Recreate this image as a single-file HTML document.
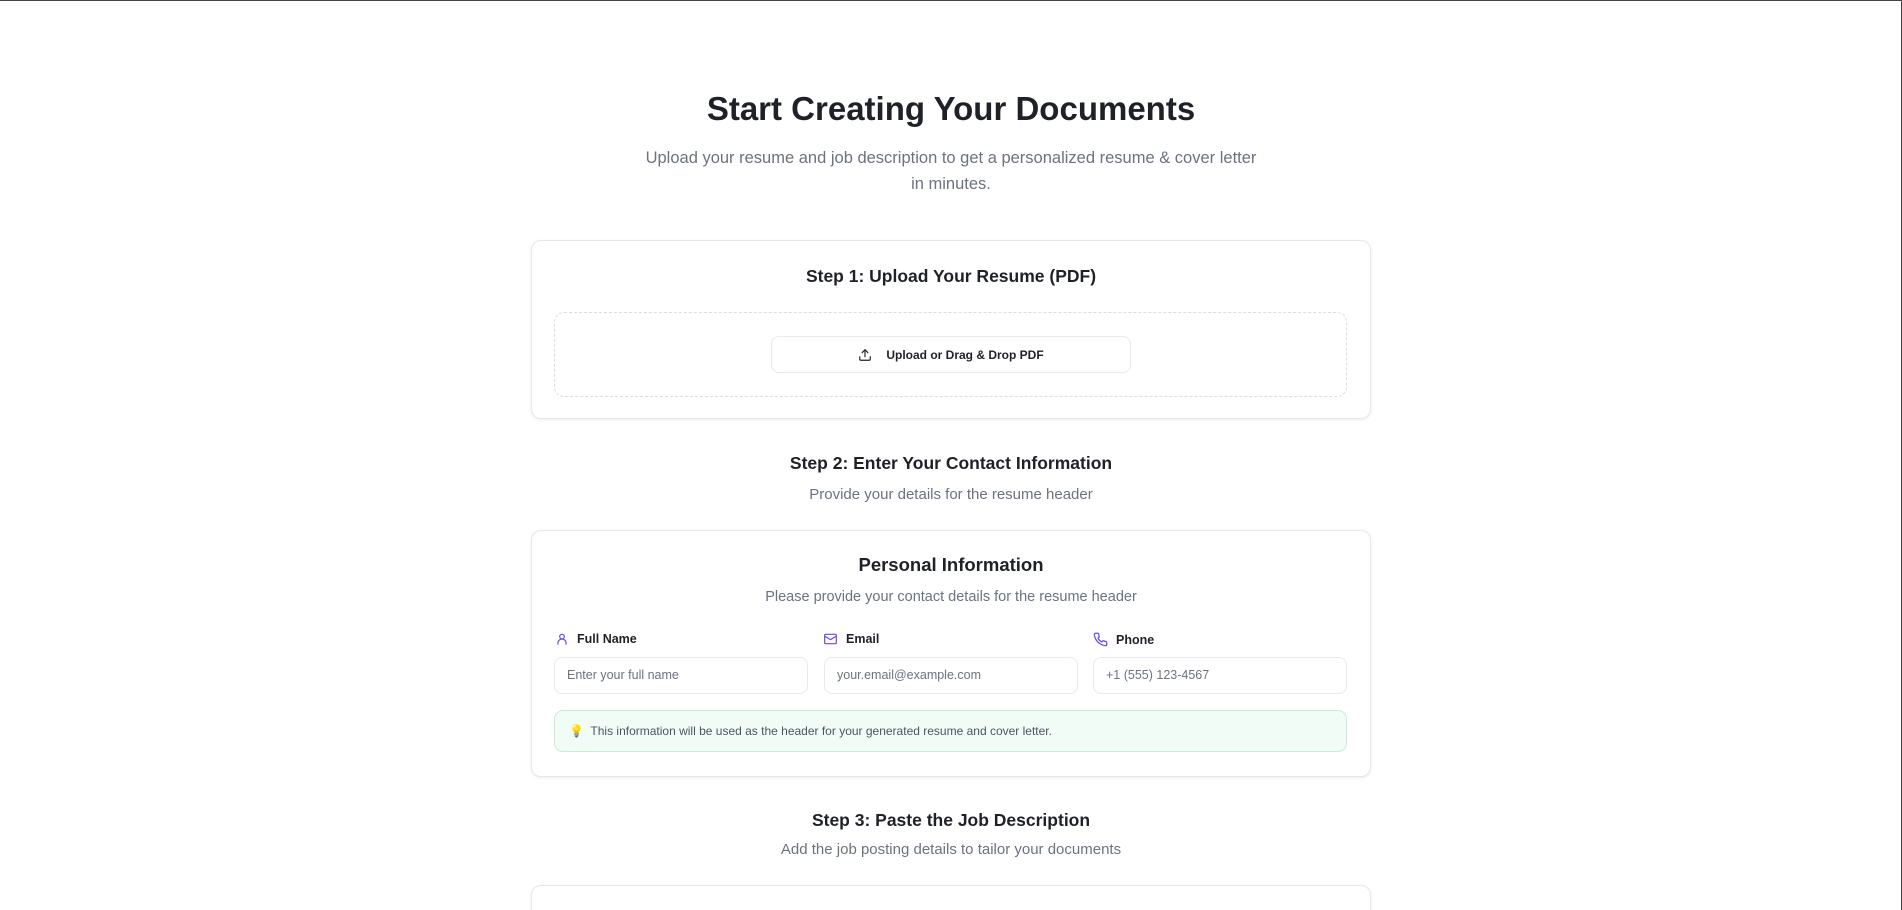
<!DOCTYPE html>
<html><head><meta charset="utf-8"><style>
*{box-sizing:border-box;margin:0;padding:0}
html,body{width:1902px;height:910px;overflow:hidden;background:#fff;font-family:"Liberation Sans","DejaVu Sans",sans-serif;color:#111827}
body{border-top:1px solid #444;border-right:1px solid #444;position:relative}
.abs{position:absolute}
.c{left:0;width:1902px;text-align:center}
h1{font-size:33px;font-weight:700;color:#1f2128}
.sub{color:#6b7280;font-size:16.5px}
.card{position:absolute;left:531px;width:840px;border:1px solid #e6e7ea;border-radius:10px;box-shadow:0 1px 3px rgba(0,0,0,.07);background:#fff}
.h2{font-size:17.5px;font-weight:600;color:#1f2128}
.lbl{position:absolute;font-size:12.5px;font-weight:700;display:flex;align-items:center;gap:8px;color:#1f2128}
.inp{position:absolute;top:656px;height:37px;width:254px;border:1px solid #e8e9ec;border-radius:8px;font-size:12.5px;color:#6b7280;padding:0 12px;line-height:35px}
</style></head><body>
<div class="abs c" style="top:89px"><h1>Start Creating Your Documents</h1></div>
<div class="abs sub" style="left:636px;width:630px;top:144px;text-align:center;line-height:26px">Upload your resume and job description to get a personalized resume &amp; cover letter<br>in minutes.</div>

<div class="card" style="top:239px;height:179px"></div>
<div class="abs c h2" style="top:265px">Step 1: Upload Your Resume (PDF)</div>
<div class="abs" style="left:554px;top:311px;width:793px;height:85px;border:1px dashed #dcdde2;border-radius:10px"></div>
<div class="abs" style="left:771px;top:335px;width:360px;height:37px;border:1px solid #e8e9ec;border-radius:8px;display:flex;align-items:center;justify-content:center;gap:14px;font-size:12px;font-weight:700;color:#1f2128">
<svg width="14" height="14" viewBox="0 0 24 24" fill="none" stroke="#222" stroke-width="2" stroke-linecap="round" stroke-linejoin="round"><path d="M21 15v4a2 2 0 0 1-2 2H5a2 2 0 0 1-2-2v-4"/><path d="M17 8l-5-5-5 5"/><path d="M12 3v12"/></svg>
<span>Upload or Drag &amp; Drop PDF</span></div>

<div class="abs c h2" style="top:452px">Step 2: Enter Your Contact Information</div>
<div class="abs c sub" style="top:485px;font-size:15px">Provide your details for the resume header</div>

<div class="card" style="top:529px;height:247px"></div>
<div class="abs c" style="top:553px;font-size:18.5px;font-weight:600;color:#1f2128">Personal Information</div>
<div class="abs c sub" style="top:588px;font-size:14.5px">Please provide your contact details for the resume header</div>

<div class="lbl" style="left:555px;top:631px"><svg width="14" height="14" viewBox="0 0 24 24" fill="none" stroke="#5b4cf0" stroke-width="2" stroke-linecap="round"><circle cx="12" cy="8" r="4"/><path d="M5 21v-2a7 7 0 0 1 14 0v2"/></svg>Full Name</div>
<div class="lbl" style="left:823px;top:631px"><svg width="15" height="14" viewBox="0 0 24 24" fill="none" stroke="#5b4cf0" stroke-width="2" stroke-linejoin="round"><rect x="2" y="4" width="20" height="16" rx="2"/><path d="M2 7l10 6 10-6"/></svg>Email</div>
<div class="lbl" style="left:1093px;top:631px"><svg width="15" height="15" viewBox="0 0 24 24" fill="none" stroke="#5b4cf0" stroke-width="2" stroke-linejoin="round"><path d="M22 16.9v3a2 2 0 0 1-2.2 2 19.8 19.8 0 0 1-8.6-3.1 19.5 19.5 0 0 1-6-6A19.8 19.8 0 0 1 2.1 4.2 2 2 0 0 1 4.1 2h3a2 2 0 0 1 2 1.7c.1 1 .4 1.9.7 2.8a2 2 0 0 1-.5 2.1L8 9.9a16 16 0 0 0 6 6l1.3-1.3a2 2 0 0 1 2.1-.4c.9.3 1.8.6 2.8.7a2 2 0 0 1 1.7 2z"/></svg>Phone</div>
<div class="inp" style="left:554px">Enter your full name</div>
<div class="inp" style="left:824px">your.email@example.com</div>
<div class="inp" style="left:1093px">+1 (555) 123-4567</div>
<div class="abs" style="left:554px;top:709px;width:793px;height:42px;border:1px solid #c8ecd6;background:#f2fcf6;border-radius:9px;font-size:12px;color:#4b5563;line-height:40px;padding-left:14px">💡&nbsp; This information will be used as the header for your generated resume and cover letter.</div>

<div class="abs c h2" style="top:809px">Step 3: Paste the Job Description</div>
<div class="abs c sub" style="top:840px;font-size:15px">Add the job posting details to tailor your documents</div>
<div class="card" style="top:884px;height:60px"></div>
</body></html>
